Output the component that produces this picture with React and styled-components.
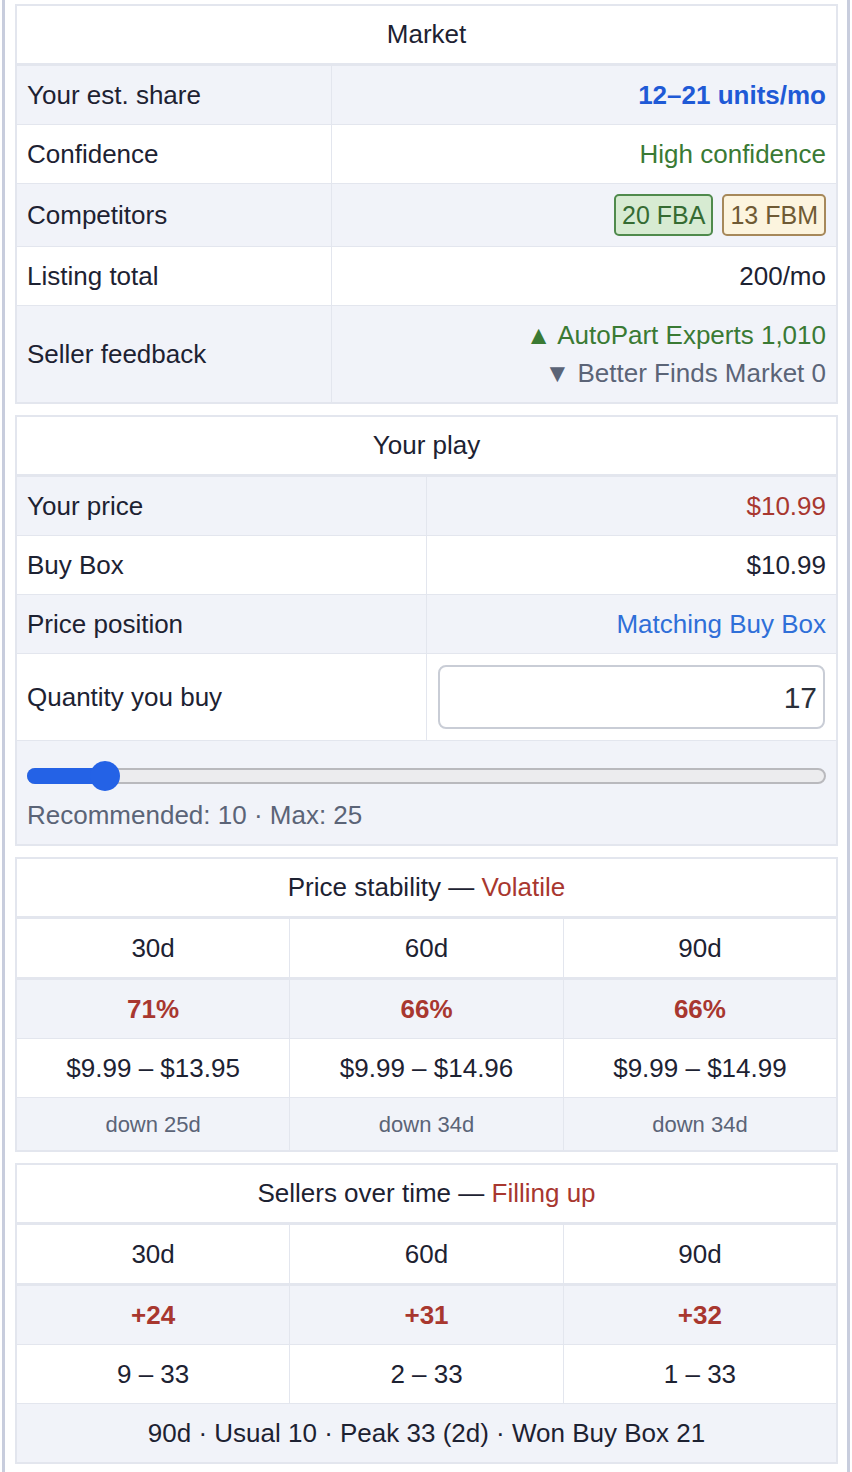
import React from "react";
import styled, { createGlobalStyle } from "styled-components";

const C = {
  text: "#1d2232",
  border: "#e3e6ee",
  shade: "#f1f3f9",
  frame: "#c8cddd",
  blue: "#1f5ad6",
  link: "#2f6fd8",
  green: "#3a7a34",
  red: "#a8372f",
  gray: "#5b6477",
};

const Global = createGlobalStyle`
  html, body { margin: 0; padding: 0; background: #fff; }
  body {
    font-family: "Liberation Sans", Arial, Helvetica, sans-serif;
    color: ${C.text};
    -webkit-font-smoothing: antialiased;
  }
`;

const Frame = styled.div`
  margin: 0 2px;
  border-left: 3px solid ${C.frame};
  border-right: 3px solid ${C.frame};
  padding: 4px 9px 8px 10px;
  display: flex;
  flex-direction: column;
  gap: 11px;
  min-height: 1472px;
  box-sizing: border-box;
`;

const Table = styled.table`
  width: 100%;
  border-collapse: collapse;
  table-layout: fixed;
  border: 2px solid ${C.border};
  font-size: 26px;
  line-height: 29px;
`;

const Head = styled.th`
  font-weight: 400;
  text-align: center;
  padding: 14px 10px 14px;
  background: #fff;
  border-bottom: 3px solid ${C.border};
`;

const Row = styled.tr`
  background: ${(p) => (p.$shade ? C.shade : "#fff")};
`;

const Cell = styled.td`
  border: 1px solid ${C.border};
  border-bottom-width: ${(p) => (p.$thick ? "3px" : "1px")};
  padding: ${(p) => p.$pad || "15px 10px 14px"};
  text-align: ${(p) => p.$align || "left"};
  vertical-align: middle;
  font-size: ${(p) => p.$size || "26px"};
  font-weight: ${(p) => (p.$bold ? 700 : 400)};
  color: ${(p) => p.$color || C.text};
  white-space: nowrap;
`;

const Tone = styled.span`
  color: ${(p) => p.$color};
  font-weight: ${(p) => (p.$bold ? 700 : 400)};
`;

const Badges = styled.div`
  display: flex;
  justify-content: flex-end;
  gap: 9px;
`;

const Badge = styled.span`
  display: inline-flex;
  align-items: center;
  height: 42px;
  box-sizing: border-box;
  padding: 0 6px;
  border-radius: 5px;
  border: 2px solid ${(p) => (p.$kind === "fba" ? "#4f8a4c" : "#a6885a")};
  background: ${(p) => (p.$kind === "fba" ? "#d7ebd2" : "#fcf4de")};
  color: ${(p) => (p.$kind === "fba" ? "#356b32" : "#6f5a34")};
  font-size: 25px;
`;

const Feedback = styled.div`
  display: flex;
  flex-direction: column;
  align-items: flex-end;
  line-height: 38px;
`;

const QtyInput = styled.div`
  height: 64px;
  box-sizing: border-box;
  border: 2px solid #c9cdd6;
  border-radius: 8px;
  background: #fff;
  display: flex;
  align-items: center;
  justify-content: flex-end;
  padding: 0 6px;
  font-size: 30px;
  color: #2a2f3a;
`;

const SliderWrap = styled.div`
  position: relative;
  height: 30px;
  display: flex;
  align-items: center;
`;

const Track = styled.div`
  position: relative;
  flex: 1;
  height: 16px;
  box-sizing: border-box;
  border-radius: 8px;
  border: 2px solid #b9b9bd;
  background: #ececee;
`;

const Fill = styled.div`
  position: absolute;
  left: -2px;
  top: -2px;
  bottom: -2px;
  border-radius: 8px;
  background: #2462e6;
`;

const Thumb = styled.div`
  position: absolute;
  top: 50%;
  width: 30px;
  height: 30px;
  margin: -15px 0 0 -15px;
  border-radius: 50%;
  background: #2462e6;
`;

const Hint = styled.div`
  margin-top: 10px;
  color: ${C.gray};
  font-size: 26px;
  line-height: 29px;
`;

const Slider = ({ pct }) => (
  <SliderWrap>
    <Track>
      <Fill style={{ width: `calc(${pct}% + 2px)` }} />
      <Thumb style={{ left: `${pct}%` }} />
    </Track>
  </SliderWrap>
);

const Triple = ({ title, tone, toneColor, heads, rows, footer }) => (
  <Table>
    <colgroup>
      <col style={{ width: "33.34%" }} />
      <col style={{ width: "33.33%" }} />
      <col style={{ width: "33.33%" }} />
    </colgroup>
    <thead>
      <tr>
        <Head colSpan={3}>
          {title} — <Tone $color={toneColor}>{tone}</Tone>
        </Head>
      </tr>
    </thead>
    <tbody>
      <Row>
        {heads.map((h) => (
          <Cell key={h} $align="center" $thick>
            {h}
          </Cell>
        ))}
      </Row>
      {rows.map((r, i) => (
        <Row key={i} $shade={r.shade}>
          {r.cells.map((c, j) => (
            <Cell
              key={j}
              $align="center"
              $bold={r.bold}
              $color={r.color}
              $size={r.size}
              $pad={r.pad}
            >
              {c}
            </Cell>
          ))}
        </Row>
      ))}
      {footer && (
        <Row $shade>
          <Cell colSpan={3} $align="center">
            {footer}
          </Cell>
        </Row>
      )}
    </tbody>
  </Table>
);

export default function App() {
  return (
    <>
      <Global />
      <Frame>
        <Table>
          <colgroup>
            <col style={{ width: "38.4%" }} />
            <col />
          </colgroup>
          <thead>
            <tr>
              <Head colSpan={2}>Market</Head>
            </tr>
          </thead>
          <tbody>
            <Row $shade>
              <Cell>Your est. share</Cell>
              <Cell $align="right" $bold $color={C.blue}>
                12–21 units/mo
              </Cell>
            </Row>
            <Row>
              <Cell>Confidence</Cell>
              <Cell $align="right" $color={C.green}>
                High confidence
              </Cell>
            </Row>
            <Row $shade>
              <Cell>Competitors</Cell>
              <Cell $pad="10px 10px 10px 10px">
                <Badges>
                  <Badge $kind="fba">20 FBA</Badge>
                  <Badge $kind="fbm">13 FBM</Badge>
                </Badges>
              </Cell>
            </Row>
            <Row>
              <Cell>Listing total</Cell>
              <Cell $align="right">200/mo</Cell>
            </Row>
            <Row $shade>
              <Cell>Seller feedback</Cell>
              <Cell $pad="10px 10px">
                <Feedback>
                  <Tone $color={C.green}>▲ AutoPart Experts 1,010</Tone>
                  <Tone $color={C.gray}>▼ Better Finds Market 0</Tone>
                </Feedback>
              </Cell>
            </Row>
          </tbody>
        </Table>

        <Table>
          <colgroup>
            <col style={{ width: "50%" }} />
            <col style={{ width: "50%" }} />
          </colgroup>
          <thead>
            <tr>
              <Head colSpan={2}>Your play</Head>
            </tr>
          </thead>
          <tbody>
            <Row $shade>
              <Cell>Your price</Cell>
              <Cell $align="right" $color={C.red}>
                $10.99
              </Cell>
            </Row>
            <Row>
              <Cell>Buy Box</Cell>
              <Cell $align="right">$10.99</Cell>
            </Row>
            <Row $shade>
              <Cell>Price position</Cell>
              <Cell $align="right" $color={C.link}>
                Matching Buy Box
              </Cell>
            </Row>
            <Row>
              <Cell>Quantity you buy</Cell>
              <Cell $pad="11px 11px 11px 11px">
                <QtyInput>17</QtyInput>
              </Cell>
            </Row>
            <Row $shade>
              <Cell colSpan={2} $pad="20px 10px 14px">
                <Slider pct={9.6} />
                <Hint>Recommended: 10 · Max: 25</Hint>
              </Cell>
            </Row>
          </tbody>
        </Table>

        <Triple
          title="Price stability"
          tone="Volatile"
          toneColor={C.red}
          heads={["30d", "60d", "90d"]}
          rows={[
            { shade: true, bold: true, color: C.red, cells: ["71%", "66%", "66%"] },
            { cells: ["$9.99 – $13.95", "$9.99 – $14.96", "$9.99 – $14.99"] },
            {
              shade: true,
              color: C.gray,
              size: "22px",
              pad: "12px 10px 11px",
              cells: ["down 25d", "down 34d", "down 34d"],
            },
          ]}
        />

        <Triple
          title="Sellers over time"
          tone="Filling up"
          toneColor={C.red}
          heads={["30d", "60d", "90d"]}
          rows={[
            { shade: true, bold: true, color: C.red, cells: ["+24", "+31", "+32"] },
            { cells: ["9 – 33", "2 – 33", "1 – 33"] },
          ]}
          footer="90d · Usual 10 · Peak 33 (2d) · Won Buy Box 21"
        />
      </Frame>
    </>
  );
}
